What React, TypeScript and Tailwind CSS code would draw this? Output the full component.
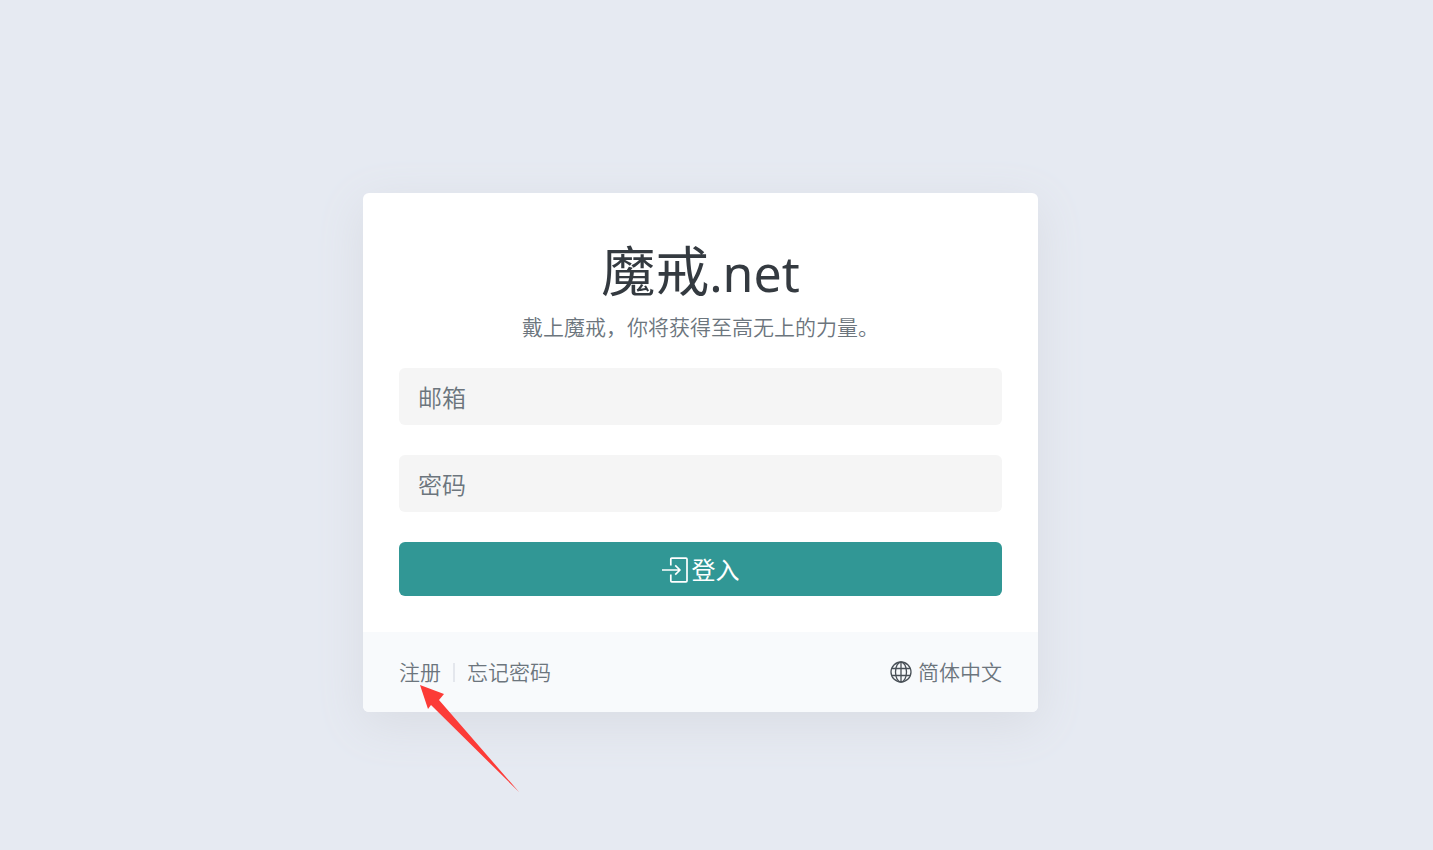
import type { InputHTMLAttributes } from "react";

function Field({ label, ...rest }: { label: string } & InputHTMLAttributes<HTMLInputElement>) {
  return (
    <input
      aria-label={label}
      placeholder={label}
      className="h-[57px] w-full rounded-md bg-[#f5f5f5] px-[19px] pt-0.5 text-2xl font-[350] text-[#495057] outline-none placeholder:text-[#6c757d]"
      {...rest}
    />
  );
}

function LoginIcon() {
  return (
    <svg width="26" height="26" viewBox="0 0 26 26" fill="none" stroke="currentColor" strokeWidth="1.7" strokeLinecap="butt" strokeLinejoin="round" aria-hidden="true">
      <path d="M8.8 8.5V2.2Q8.8 1.2 9.8 1.2H24Q25 1.2 25 2.2V23.8Q25 24.8 24 24.8H9.8Q8.8 24.8 8.8 23.8V17.5" />
      <path d="M0 13H18M13.2 8.3L18 13L13.2 17.7" />
    </svg>
  );
}

function GlobeIcon() {
  return (
    <svg width="22" height="22" viewBox="0 0 22 22" fill="none" stroke="#495057" strokeWidth="1.3" aria-hidden="true">
      <circle cx="11" cy="11" r="10" />
      <ellipse cx="11" cy="11" rx="5.5" ry="10" />
      <path d="M11 1V21M1.7 7.5H20.3M1.7 14.5H20.3" />
    </svg>
  );
}

export default function App() {
  return (
    <main className="flex min-h-screen items-start justify-center bg-[#e6eaf2] pt-[193px] pr-8 font-['Noto_Sans','Noto_Sans_CJK_SC',sans-serif] text-[#6c757d]">
      <div className="w-full max-w-[675px] rounded-md bg-white shadow-[0_12px_48px_#d9dce3]">
        <form className="px-9 pt-12 pb-9" onSubmit={(e) => e.preventDefault()}>
          <h1 className="text-center text-[54px] leading-[60px] text-[#343a40]">魔戒<span className="text-[50px]">.net</span></h1>
          <p className="mt-2 mb-[25px] text-center text-[21px] leading-8 font-[350]">戴上魔戒，你将获得至高无上的力量。</p>
          <div className="flex flex-col gap-[30px]">
            <Field label="邮箱" type="email" />
            <Field label="密码" type="password" />
            <button type="submit" className="flex h-[54px] items-center justify-center gap-1 rounded-md bg-[#319795] pt-0.5 text-2xl text-white">
              <LoginIcon />
              <span>登入</span>
            </button>
          </div>
        </form>
        <footer className="flex h-20 items-center justify-between rounded-b-md bg-[#f8fafc] px-9 text-[21px] leading-8 font-[350]">
          <nav className="relative flex items-center">
            <a href="#register">注册</a>
            <span className="mx-3 h-[19px] w-0.5 bg-[#e4e7ed]" />
            <a href="#forgot">忘记密码</a>
            <svg className="pointer-events-none absolute top-7 left-5" width="102" height="110" viewBox="0 0 102 110" aria-hidden="true">
              <path d="M1 1L25 10L20 16L100 108L12 21L9 25Z" fill="#fc3b37" />
            </svg>
          </nav>
          <button type="button" className="flex items-center gap-1.5">
            <GlobeIcon />
            <span>简体中文</span>
          </button>
        </footer>
      </div>
    </main>
  );
}
